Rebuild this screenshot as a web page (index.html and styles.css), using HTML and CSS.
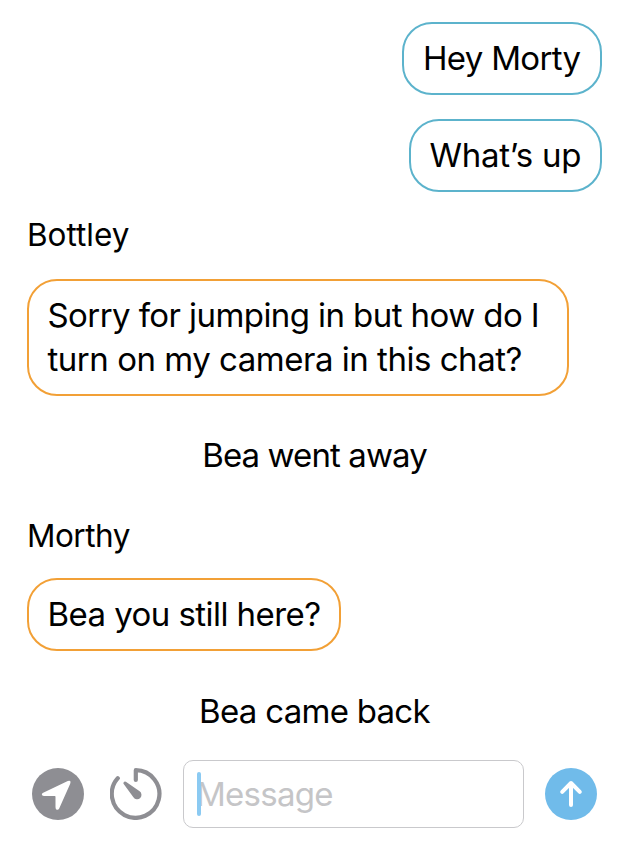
FILE: index.html
```html
<!DOCTYPE html>
<html lang="en">
<head>
<meta charset="utf-8">
<title>Chat</title>
<link rel="stylesheet" href="styles.css">
</head>
<body>
<main class="chat">
  <section class="messages">
    <p class="bubble mine hey">Hey Morty</p>
    <p class="bubble mine whats">What’s up</p>
    <h2 class="name bottley">Bottley</h2>
    <p class="bubble theirs question"><span class="first">Sorry for jumping in but how do I</span><br><span class="second">turn on my camera in this chat?</span></p>
    <p class="status away"><span>Bea went away</span></p>
    <h2 class="name morthy">Morthy</h2>
    <p class="bubble theirs still">Bea you still here?</p>
    <p class="status back"><span>Bea came back</span></p>
  </section>
  <footer class="composer">
    <button class="icon" aria-label="Location">
      <svg viewBox="0 0 52 52"><circle cx="26" cy="26" r="26" fill="#8e8e93"/><path d="M11.2 24.7 35.8 13.1Q39.6 12 38.1 16L27.2 40.6Q26 42.6 24.3 41.4 23.5 40.8 23.5 39V28.7Q23.5 28.1 22.9 28.1H12Q9.8 27.8 9.8 26.2 9.9 25.3 11.2 24.7Z" fill="#fff"/></svg>
    </button>
    <button class="icon" aria-label="Timer">
      <svg viewBox="0 0 52 52"><path d="M25.8 12V2.2A23.8 23.8 0 1 1 7.8 10.2" fill="none" stroke="#8e8e93" stroke-width="4.2" stroke-linecap="round" stroke-linejoin="round"/><path d="M13.4 15Q13.8 12.9 15.9 13.7L29.3 23.1A4.4 4.4 0 1 1 23.4 29.3L13.7 16Q13.3 15.5 13.4 15Z" fill="#8e8e93"/></svg>
    </button>
    <div class="field"><i class="caret"></i><span class="placeholder">Message</span></div>
    <button class="icon" aria-label="Send">
      <svg viewBox="0 0 52 52"><circle cx="26" cy="26" r="26" fill="#70bbea"/><path d="M26 37V15M17.2 23.8 26 15l8.8 8.8" fill="none" stroke="#fff" stroke-width="4" stroke-linecap="round" stroke-linejoin="round"/></svg>
    </button>
  </footer>
</main>
</body>
</html>
```

FILE: styles.css
```css
* { box-sizing: border-box; }
body { margin: 0; background: #fff; color: #000; font-family: Inter, sans-serif; }
.chat { width: 624px; height: 844px; overflow: hidden; }
.messages { height: 760px; padding: 22px 22px 0 27px; display: flex; flex-direction: column; align-items: flex-start; }
p, h2 { margin: 0; font-weight: 400; white-space: nowrap; }
.bubble { border: 2px solid; border-radius: 30px; padding: 12px 19px 13px 18.5px; font-size: 33px; line-height: 44px; }
.mine { align-self: flex-end; border-color: #5cb3cc; padding-top: 11.5px; padding-bottom: 13.5px; }
.theirs { border-color: #f2a036; }
.hey { width: 200px; padding-left: 19px; letter-spacing: -0.68px; }
.whats { width: 193px; margin-top: 24px; letter-spacing: -0.25px; }
.name { font-size: 31.5px; line-height: 40px; }
.bottley { margin-top: 23px; }
.question { width: 542px; margin-top: 23.5px; }
.first { letter-spacing: -0.58px; }
.second { letter-spacing: -0.48px; }
.status { align-self: stretch; text-align: center; font-size: 33px; line-height: 44px; }
.away { margin-top: 37.5px; letter-spacing: -0.9px; }
.morthy { margin-top: 38.5px; letter-spacing: -0.5px; }
.still { width: 314px; margin-top: 22.5px; letter-spacing: -0.56px; }
.back { margin-top: 38px; letter-spacing: -0.72px; }
.composer { display: flex; align-items: flex-start; padding-left: 32px; }
.icon { width: 52px; height: 52px; margin: 8px 26px 0 0; padding: 0; border: 0; background: none; }
.icon svg { display: block; width: 52px; height: 52px; }
.field { position: relative; width: 341px; height: 68px; margin: 0 21px 0 -5px; padding: 11px 12px; border: 1px solid #c9c9cc; border-radius: 10px; font-size: 33px; line-height: 44px; letter-spacing: -0.75px; color: #c5c5c7; }
.caret { position: absolute; left: 13px; top: 11px; width: 4px; height: 44px; border-radius: 2px; background: #8bcaf2; }
```
